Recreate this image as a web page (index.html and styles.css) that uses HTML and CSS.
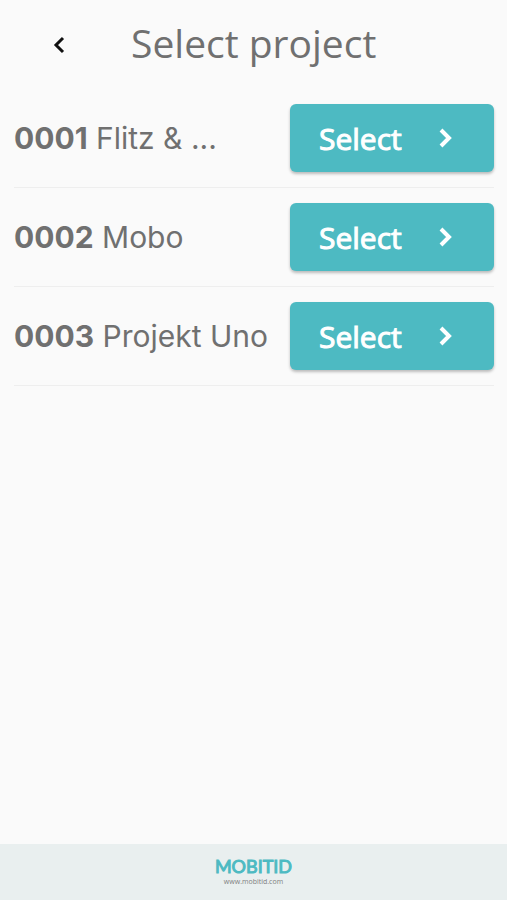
FILE: index.html
```html
<!DOCTYPE html>
<html lang="en">
<head>
<meta charset="utf-8">
<meta name="viewport" content="width=device-width, initial-scale=1">
<title>Select project</title>
<link rel="stylesheet" href="styles.css">
</head>
<body>
<header class="header">
  <button class="back" type="button" aria-label="Back">
    <svg width="12" height="18" viewBox="0 0 12 18"><path d="M10 2 3 9l7 7"/></svg>
  </button>
  <h1 class="title">Select project</h1>
</header>
<main class="main">
  <ul class="projects">
    <li class="project">
      <span class="name"><b>0001</b> Flitz &amp; ...</span>
      <button class="select" type="button">Select <svg width="14" height="20" viewBox="0 0 14 20"><path d="m2 2 8 8-8 8"/></svg></button>
    </li>
    <li class="project">
      <span class="name"><b>0002</b> Mobo</span>
      <button class="select" type="button">Select <svg width="14" height="20" viewBox="0 0 14 20"><path d="m2 2 8 8-8 8"/></svg></button>
    </li>
    <li class="project">
      <span class="name"><b>0003</b> Projekt Uno</span>
      <button class="select" type="button">Select <svg width="14" height="20" viewBox="0 0 14 20"><path d="m2 2 8 8-8 8"/></svg></button>
    </li>
  </ul>
</main>
<footer class="footer">
  <span class="brand">MOBITID</span>
  <a class="site" href="#">www.mobitid.com</a>
</footer>
</body>
</html>
```

FILE: styles.css
```css
* { box-sizing: border-box; }
body {
  margin: 0;
  min-height: 100vh;
  display: flex;
  flex-direction: column;
  background: #fafafa;
  color: #707070;
  font-family: "Open Sans", sans-serif;
}
button { border: 0; font: inherit; cursor: pointer; }
svg { fill: none; stroke: currentColor; stroke-width: 3; }
.header { display: flex; align-items: center; padding: 19px 13px 22px 39px; }
.back { display: flex; justify-content: center; width: 40px; padding: 10px 8px 6px; background: none; color: #111; }
.title { margin: 0 0 0 52px; font-size: 39px; line-height: 48px; font-weight: 400; }
.main { flex: 1; padding: 0 13px 0 14px; }
.projects { margin: 0; padding: 0; list-style: none; }
.project {
  display: flex;
  align-items: center;
  justify-content: space-between;
  padding: 15px 0;
  border-bottom: 1px solid #eee;
}
.name { font-family: Inter, sans-serif; font-size: 30px; line-height: 36px; white-space: nowrap; }
.name b { font-weight: 700; }
.select {
  display: flex;
  align-items: center;
  justify-content: space-between;
  width: 204px;
  height: 68px;
  padding: 0 41px 0 29px;
  border-radius: 6px;
  background: #4dbac2;
  color: #fff;
  font-size: 30px;
  -webkit-text-stroke: 1px currentColor;
  box-shadow: 0 2px 3px rgba(0, 0, 0, 0.25);
}
.select svg { stroke-width: 4; }
.footer {
  display: flex;
  flex-direction: column;
  align-items: center;
  gap: 1px;
  padding: 12px 0 13px;
  background: #e9efef;
}
.brand {
  color: #4dbac2;
  font-family: Lato, sans-serif;
  font-size: 18px;
  line-height: 20px;
  font-weight: 400;
  -webkit-text-stroke: 1px currentColor;
}
.site { color: #808080; font-size: 7px; line-height: 10px; text-decoration: none; }
```
